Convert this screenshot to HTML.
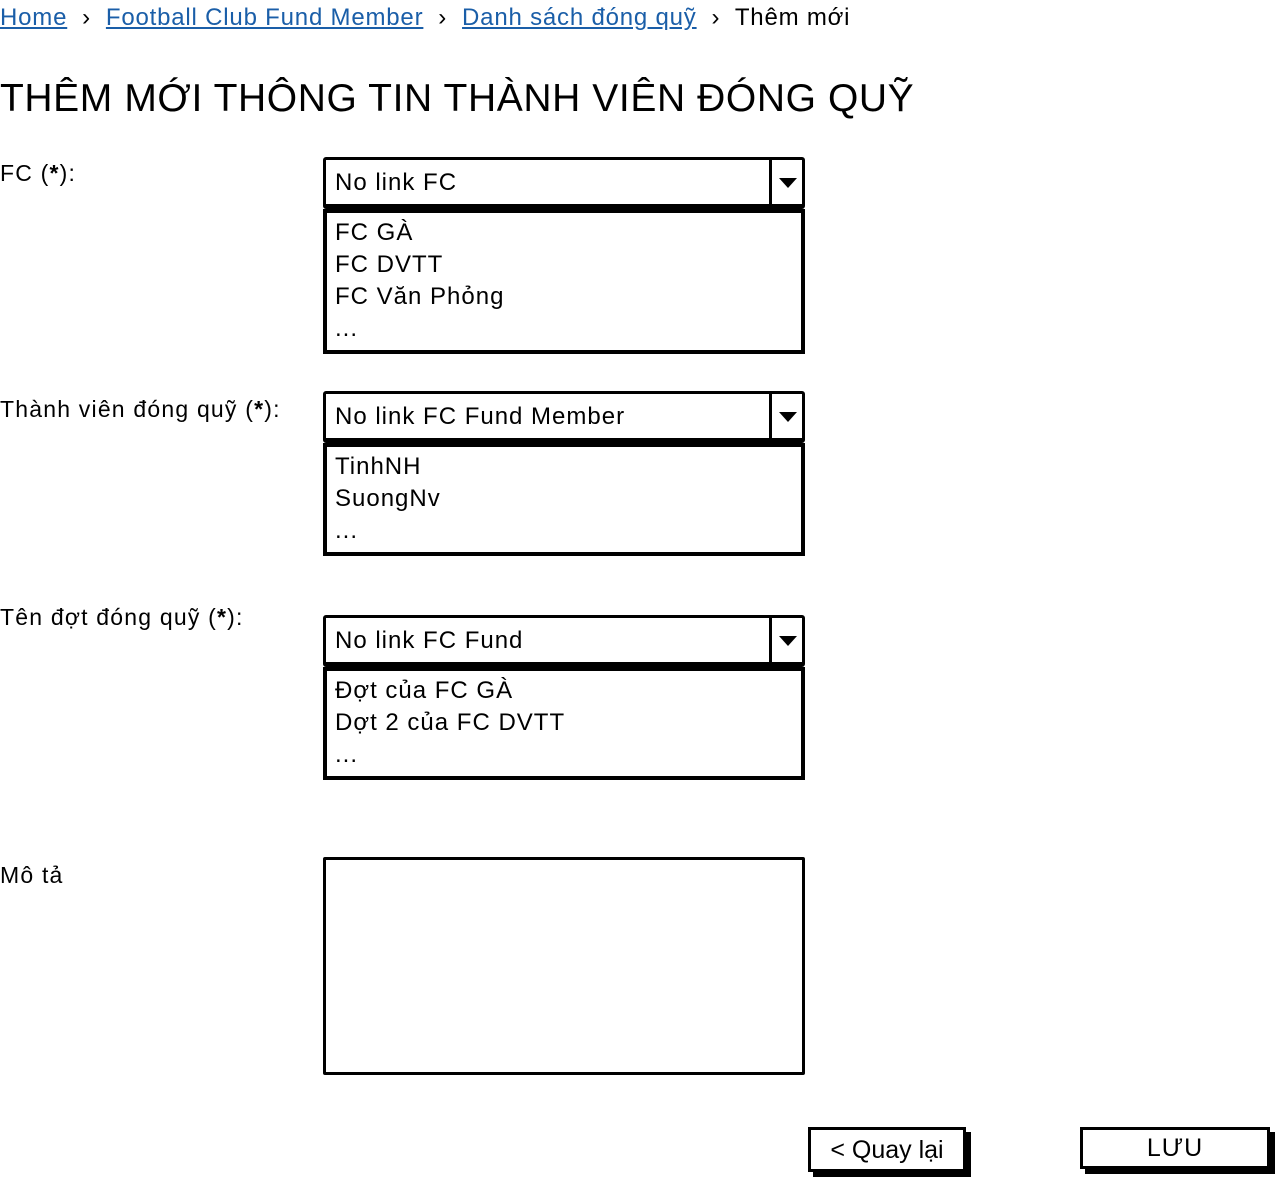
<!DOCTYPE html>
<html><head><meta charset="utf-8"><style>
body{margin:0;width:1276px;height:1178px;background:#fff;font-family:"Liberation Sans","DejaVu Sans",sans-serif;color:#000;position:relative;overflow:hidden;letter-spacing:1px}
.a{position:absolute;white-space:nowrap}
.bc{top:4px;left:0;font-size:24px;letter-spacing:0.8px}
.bc a{color:#1a5ea8;text-decoration:underline}
.t{top:77px;left:0;font-size:39px;letter-spacing:0.6px}
.l{left:0;font-size:23px;letter-spacing:1.2px}
.sel{position:absolute;left:323px;width:476px;height:44px;border:3px solid #000;border-bottom-width:5px;border-radius:3px;font-size:24px}
.sel span{position:absolute;left:9px;top:9px}
.sel .dv{position:absolute;left:443px;top:0;bottom:0;border-left:3px solid #000}
.sel .ar{position:absolute;left:453px;top:18px;width:0;height:0;border-left:9px solid transparent;border-right:9px solid transparent;border-top:10px solid #000}
.lst{position:absolute;left:323px;width:482px;border:4px solid #000;font-size:24px;line-height:32px;padding:4px 0 0 8px;box-sizing:border-box}
.btn{position:absolute;border:3px solid #000;box-shadow:5px 5px 0 #000;font-size:25px;text-align:center;box-sizing:border-box}
</style></head><body>
<div class="a bc"><a>Home</a> &nbsp;›&nbsp; <a>Football Club Fund Member</a> &nbsp;›&nbsp; <a>Danh sách đóng quỹ</a> &nbsp;›&nbsp; Thêm mới</div>
<div class="a t">THÊM MỚI THÔNG TIN THÀNH VIÊN ĐÓNG QUỸ</div>

<div class="a l" style="top:160px">FC (<b>*</b>):</div>
<div class="sel" style="top:157px"><span>No link FC</span><div class="dv"></div><div class="ar"></div></div>
<div class="lst" style="top:209px;height:145px">FC GÀ<br>FC DVTT<br>FC Văn Phỏng<br>...</div>

<div class="a l" style="top:396px">Thành viên đóng quỹ (<b>*</b>):</div>
<div class="sel" style="top:391px"><span>No link FC Fund Member</span><div class="dv"></div><div class="ar"></div></div>
<div class="lst" style="top:443px;height:113px">TinhNH<br>SuongNv<br>...</div>

<div class="a l" style="top:604px">Tên đợt đóng quỹ (<b>*</b>):</div>
<div class="sel" style="top:615px"><span>No link FC Fund</span><div class="dv"></div><div class="ar"></div></div>
<div class="lst" style="top:667px;height:113px">Đợt của FC GÀ<br>Dợt 2 của FC DVTT<br>...</div>

<div class="a l" style="top:862px">Mô tả</div>
<div style="position:absolute;left:323px;top:857px;width:482px;height:218px;border:3px solid #000;box-sizing:border-box;border-radius:2px"></div>

<div class="btn" style="left:808px;top:1127px;width:158px;height:45px;line-height:40px;letter-spacing:0">&lt; Quay lại</div>
<div class="btn" style="left:1080px;top:1127px;width:190px;height:42px;line-height:37px">LƯU</div>
</body></html>
